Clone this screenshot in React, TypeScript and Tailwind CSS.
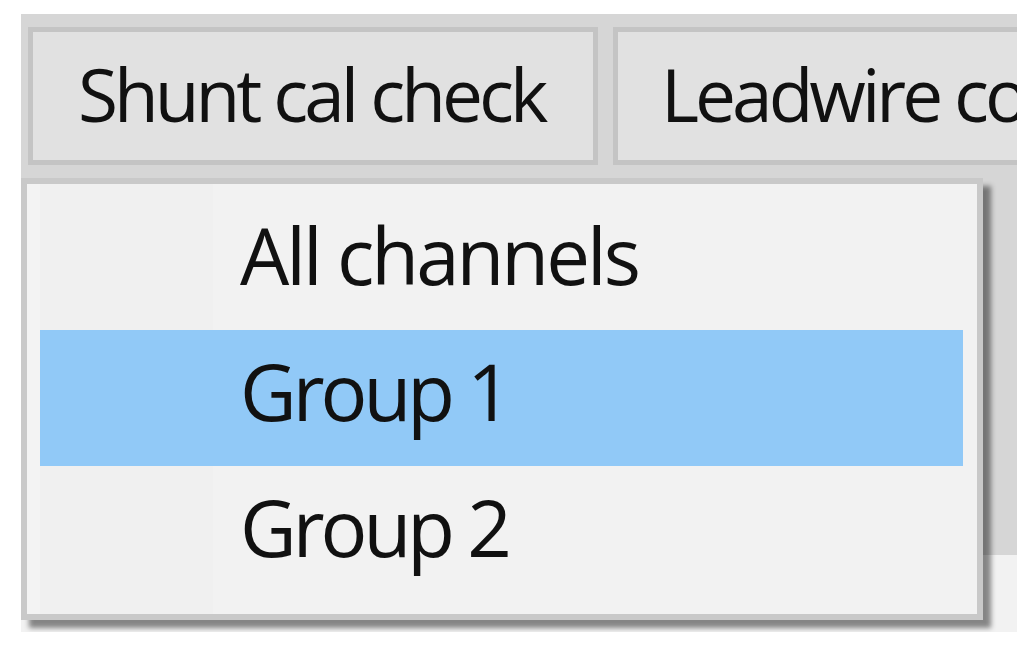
import React from "react";

const font = { fontFamily: '"Open Sans", "Noto Sans", sans-serif' };

export default function App() {
  return (
    <div className="w-[1024px] h-[650px] bg-white overflow-hidden" style={font}>
      <div className="relative ml-[21px] mt-[14px] w-[996px] h-[618px] bg-[#d6d6d6] flex flex-col overflow-hidden">
        {/* toolbar */}
        <div className="flex gap-[15px] pl-[7px] pt-[13px] h-[151px] shrink-0">
          <div className="w-[570px] h-[138px] shrink-0 border-[5px] border-[#c4c4c4] bg-[#e1e1e1] flex items-center pl-[45px] pb-[4px] text-[73px] tracking-[-4px] text-[#111] whitespace-nowrap">
            Shunt cal check
          </div>
          <div className="w-[420px] h-[138px] shrink-0 border-[5px] border-[#c4c4c4] bg-[#e1e1e1] flex items-center pl-[43px] pb-[4px] text-[73px] tracking-[-4px] text-[#111] whitespace-nowrap overflow-hidden">
            Leadwire compensation
          </div>
        </div>
        {/* content area below */}
        <div className="flex-1 flex flex-col">
          <div className="h-[390px] bg-[#d6d6d6]" />
          <div className="flex-1 bg-[#f2f2f2]" />
        </div>

        {/* dropdown menu */}
        <div className="absolute left-0 top-[164px] w-[962px] h-[442px] bg-[#c9c9c9] p-[6px] shadow-[8px_8px_5px_rgba(0,0,0,0.45)]">
          <div className="w-full h-full bg-[#f2f2f2] flex">
            <div className="w-[13px] bg-[#f3f3f3] shrink-0" />
            <div className="flex-1 relative pt-[10px]">
              <div className="absolute left-0 top-0 bottom-0 w-[173px] bg-[#f0f0f0]" />
              <div className="relative flex flex-col mr-[14px]">
                <div className="h-[136px] flex items-center pl-[200px] pb-[14px] text-[78px] tracking-[-3px] text-[#111] whitespace-nowrap">
                  All channels
                </div>
                <div className="h-[136px] flex items-center pl-[200px] pb-[14px] text-[78px] tracking-[-4px] text-[#111] bg-[#91c9f7] whitespace-nowrap">
                  Group 1
                </div>
                <div className="h-[136px] flex items-center pl-[200px] pb-[14px] text-[78px] tracking-[-4px] text-[#111] whitespace-nowrap">
                  Group 2
                </div>
              </div>
            </div>
          </div>
        </div>
      </div>
    </div>
  );
}
